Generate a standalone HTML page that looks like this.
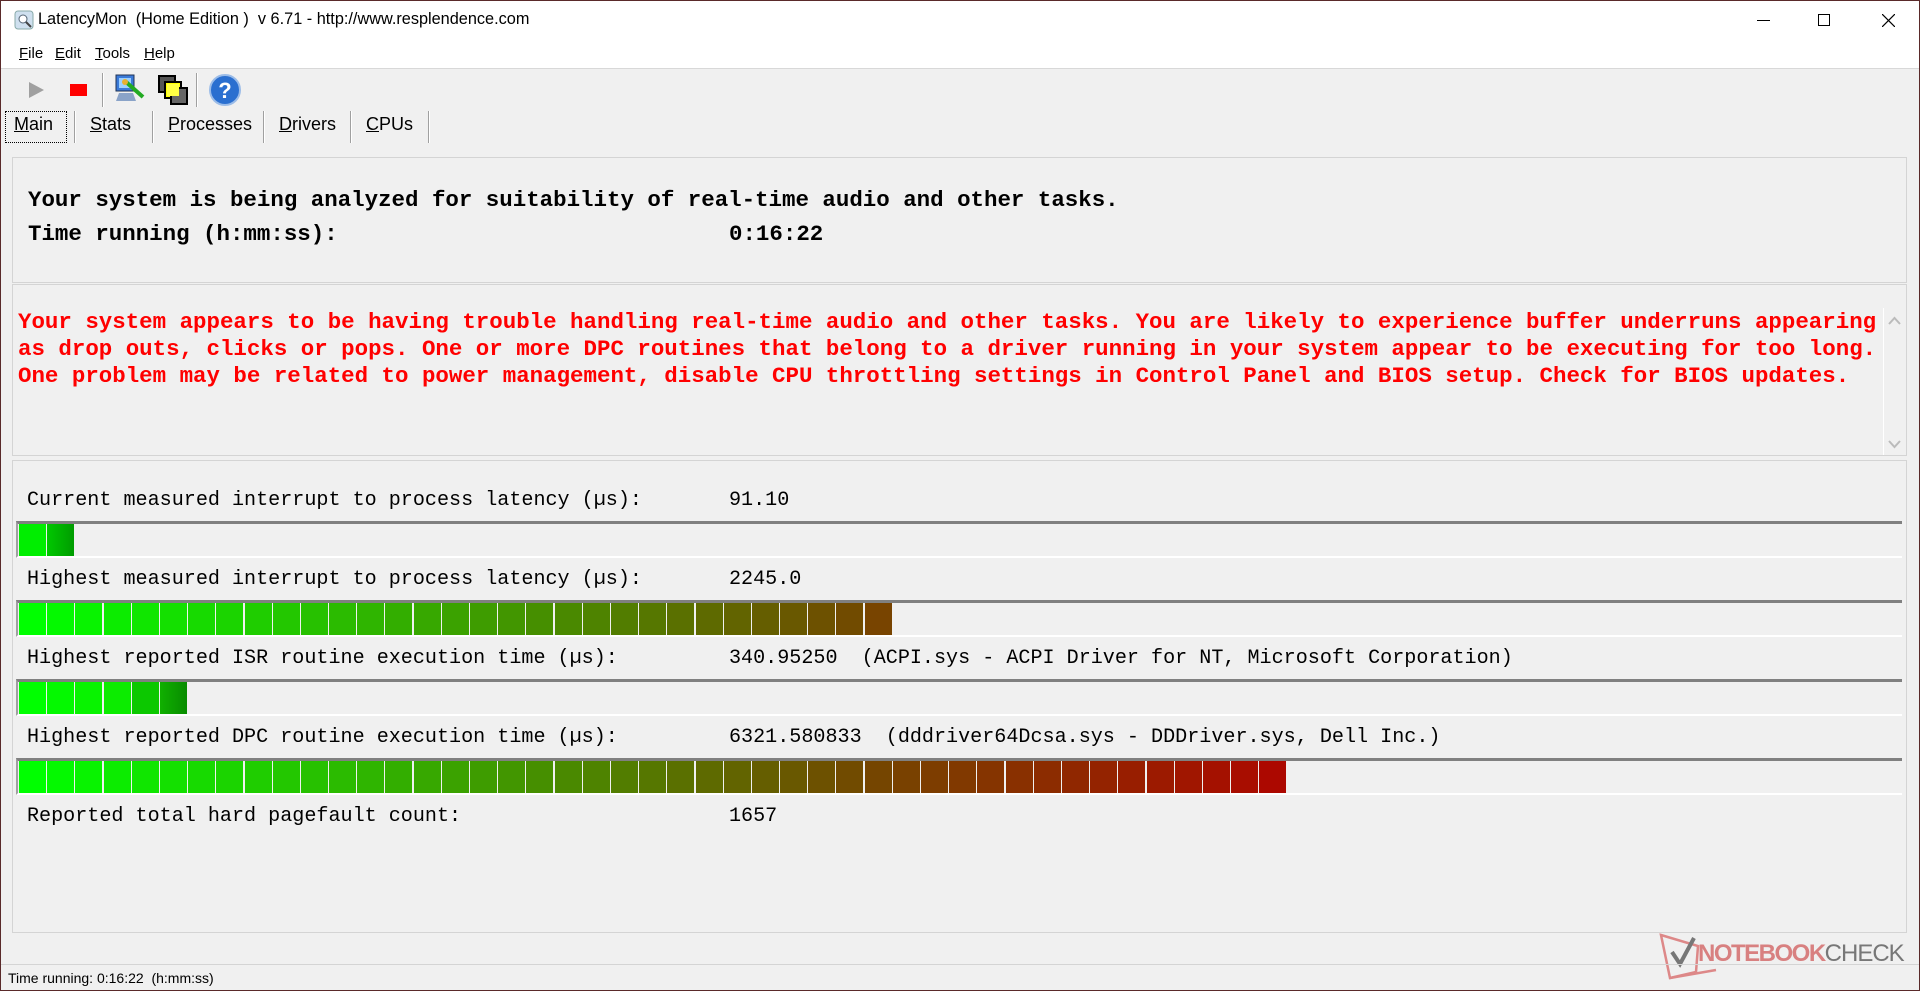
<!DOCTYPE html>
<html><head><meta charset="utf-8"><style>
*{margin:0;padding:0;box-sizing:border-box}
body{width:1920px;height:991px;overflow:hidden;background:#f0f0f0;font-family:"Liberation Sans",sans-serif;position:relative}
.abs{position:absolute}
.frame{position:absolute;left:0;top:0;width:1920px;height:991px;border:1px solid #5a2a2a;pointer-events:none}
.title{left:0;top:0;width:1920px;height:40px;background:#fff}
.menu{left:0;top:40px;width:1920px;height:29px;background:#fff;border-bottom:1px solid #d8d8d8}
.mi{position:absolute;top:45px;font-size:15px;color:#000}
.mono{font-family:"Liberation Mono",monospace}
.panel{position:absolute;left:12px;width:1895px;border:1px solid #d4d4d4;background:#f0f0f0}
.b{font-weight:bold;font-size:22.45px;white-space:pre}
.lbl{position:absolute;font-size:20.1px;white-space:pre;color:#000;font-family:"Liberation Mono",monospace}
.bar{position:absolute;left:16px;width:1886px;height:37px;border-top:3px solid #808080;border-left:2px solid #a0a0a0;border-bottom:2px solid #fff;background:#f0f0f0;display:flex;gap:1.2px;padding-left:1px}
.bar i{display:block;width:27px;height:32px;flex:none}
.tab{position:absolute;top:114px;font-size:18px}
.sep{position:absolute;top:111px;width:2px;height:32px;border-left:1px solid #a0a0a0;border-right:1px solid #fff}
</style></head><body>
<div class="abs title"></div>
<svg class="abs" style="left:13px;top:9px" width="22" height="22" viewBox="0 0 22 22"><rect x="2" y="2" width="18" height="18" rx="3" fill="#cfe0ef" stroke="#8aa"/><circle cx="10" cy="10" r="4" fill="#fff" stroke="#567"/><line x1="13" y1="13" x2="18" y2="18" stroke="#444" stroke-width="2"/></svg>
<div class="abs" style="left:38px;top:10px;font-size:16.3px;color:#000;white-space:pre">LatencyMon  (Home Edition )  v 6.71 - http://www.resplendence.com</div>
<div class="abs" style="left:1757px;top:20px;width:13px;height:1px;background:#000"></div>
<div class="abs" style="left:1818px;top:14px;width:12px;height:12px;border:1px solid #000"></div>
<svg class="abs" style="left:1882px;top:14px" width="13" height="13"><path d="M0 0L13 13M13 0L0 13" stroke="#000" stroke-width="1.2"/></svg>
<div class="abs menu"></div>
<div class="mi" style="left:19px"><u>F</u>ile</div>
<div class="mi" style="left:55px"><u>E</u>dit</div>
<div class="mi" style="left:95px"><u>T</u>ools</div>
<div class="mi" style="left:144px"><u>H</u>elp</div>
<svg class="abs" style="left:28px;top:81px" width="18" height="18"><path d="M1 1L16 9L1 17Z" fill="#a0a0a0"/></svg>
<div class="abs" style="left:70px;top:84px;width:17px;height:12px;background:#f00"></div>
<div class="abs" style="left:102px;top:73px;width:2px;height:34px;border-left:1px solid #a0a0a0;border-right:1px solid #fff"></div>
<svg class="abs" style="left:113px;top:73px" width="34" height="34"><rect x="3" y="2" width="18" height="16" fill="#3a7ad8" stroke="#235"/><rect x="6" y="5" width="12" height="10" fill="#9cd0ff"/><path d="M6 20h14l3 8H3z" fill="#8aa3c8"/><path d="M12 8L30 24" stroke="#2a2" stroke-width="4"/><circle cx="12" cy="9" r="3" fill="#e8b030"/></svg>
<svg class="abs" style="left:158px;top:74px" width="32" height="32"><rect x="1" y="2" width="16" height="16" fill="#555" stroke="#000" stroke-width="2"/><rect x="7" y="8" width="16" height="16" fill="#ff0" stroke="#000" stroke-width="2"/><rect x="13" y="14" width="16" height="16" fill="#666" stroke="#000" stroke-width="2"/><rect x="9" y="10" width="12" height="12" fill="#ff4"/></svg>
<div class="abs" style="left:196px;top:73px;width:2px;height:34px;border-left:1px solid #a0a0a0;border-right:1px solid #fff"></div>
<svg class="abs" style="left:209px;top:74px" width="32" height="32"><circle cx="16" cy="16" r="15" fill="#2a6fd0" stroke="#9bbce8" stroke-width="2"/><text x="16" y="24" font-size="22" font-weight="bold" text-anchor="middle" fill="#fff" font-family="Liberation Sans">?</text></svg>
<div class="abs" style="left:5px;top:111px;width:62px;height:32px;border:1px dotted #000"></div>
<div class="tab" style="left:14px"><u>M</u>ain</div>
<div class="sep" style="left:74px"></div>
<div class="tab" style="left:90px"><u>S</u>tats</div>
<div class="sep" style="left:152px"></div>
<div class="tab" style="left:168px"><u>P</u>rocesses</div>
<div class="sep" style="left:263px"></div>
<div class="tab" style="left:279px"><u>D</u>rivers</div>
<div class="sep" style="left:350px"></div>
<div class="tab" style="left:366px"><u>C</u>PUs</div>
<div class="sep" style="left:428px"></div>

<div class="panel" style="top:157px;height:126px"></div>
<div class="abs mono b" style="left:28px;top:187px">Your system is being analyzed for suitability of real-time audio and other tasks.</div>
<div class="abs mono b" style="left:28px;top:221px">Time running (h:mm:ss):</div>
<div class="abs mono b" style="left:729px;top:221px">0:16:22</div>

<div class="panel" style="top:284px;height:172px"></div>
<div class="abs mono b" style="left:18px;top:309px;color:#f00;line-height:27px">Your system appears to be having trouble handling real-time audio and other tasks. You are likely to experience buffer underruns appearing
as drop outs, clicks or pops. One or more DPC routines that belong to a driver running in your system appear to be executing for too long.
One problem may be related to power management, disable CPU throttling settings in Control Panel and BIOS setup. Check for BIOS updates.</div>
<div class="abs" style="left:1883px;top:308px;width:23px;height:147px;background:#f0f0f0;border-left:1px solid #fff"></div>
<svg class="abs" style="left:1888px;top:316px" width="13" height="9"><path d="M1 8L6.5 2L12 8" stroke="#bbb" stroke-width="2" fill="none"/></svg>
<svg class="abs" style="left:1888px;top:440px" width="13" height="9"><path d="M1 1L6.5 7L12 1" stroke="#bbb" stroke-width="2" fill="none"/></svg>

<div class="panel" style="top:460px;height:473px"></div>
<div class="lbl" style="left:27px;top:489px">Current measured interrupt to process latency (µs):</div>
<div class="lbl" style="left:729px;top:489px">91.10</div>
<div class="bar" style="top:521px"><i style="background:#00ee00"></i><i style="background:linear-gradient(90deg,#00c800,#009c00)"></i></div>
<div class="lbl" style="left:27px;top:568px">Highest measured interrupt to process latency (µs):</div>
<div class="lbl" style="left:729px;top:568px">2245.0</div>
<div class="bar" style="top:600px">
<i style="background:rgb(0,255,0)"></i><i style="background:rgb(4,249,0)"></i><i style="background:rgb(8,243,0)"></i><i style="background:rgb(12,236,0)"></i><i style="background:rgb(16,230,0)"></i><i style="background:rgb(20,224,0)"></i><i style="background:rgb(23,218,0)"></i><i style="background:rgb(27,212,0)"></i><i style="background:rgb(31,205,0)"></i><i style="background:rgb(35,199,0)"></i><i style="background:rgb(39,193,0)"></i><i style="background:rgb(43,187,0)"></i><i style="background:rgb(47,181,0)"></i><i style="background:rgb(51,174,0)"></i><i style="background:rgb(55,168,0)"></i><i style="background:rgb(59,162,0)"></i><i style="background:rgb(62,156,0)"></i><i style="background:rgb(66,150,0)"></i><i style="background:rgb(70,143,0)"></i><i style="background:rgb(74,137,0)"></i><i style="background:rgb(78,131,0)"></i><i style="background:rgb(82,125,0)"></i><i style="background:rgb(86,119,0)"></i><i style="background:rgb(90,112,0)"></i><i style="background:rgb(94,106,0)"></i><i style="background:rgb(98,100,0)"></i><i style="background:rgb(101,94,0)"></i><i style="background:rgb(105,88,0)"></i><i style="background:rgb(109,81,0)"></i><i style="background:rgb(113,75,0)"></i><i style="background:rgb(120,68,0)"></i>
</div>
<div class="lbl" style="left:27px;top:647px">Highest reported ISR routine execution time (µs):</div>
<div class="lbl" style="left:729px;top:647px">340.95250  (ACPI.sys - ACPI Driver for NT, Microsoft Corporation)</div>
<div class="bar" style="top:679px"><i style="background:rgb(0,255,0)"></i><i style="background:rgb(4,249,0)"></i><i style="background:rgb(8,243,0)"></i><i style="background:rgb(12,236,0)"></i><i style="background:rgb(12,200,0)"></i><i style="background:linear-gradient(90deg,#10b000,#088c00)"></i></div>
<div class="lbl" style="left:27px;top:726px">Highest reported DPC routine execution time (µs):</div>
<div class="lbl" style="left:729px;top:726px">6321.580833  (dddriver64Dcsa.sys - DDDriver.sys, Dell Inc.)</div>
<div class="bar" style="top:758px">
<i style="background:rgb(0,255,0)"></i><i style="background:rgb(4,249,0)"></i><i style="background:rgb(8,243,0)"></i><i style="background:rgb(12,236,0)"></i><i style="background:rgb(16,230,0)"></i><i style="background:rgb(20,224,0)"></i><i style="background:rgb(23,218,0)"></i><i style="background:rgb(27,212,0)"></i><i style="background:rgb(31,205,0)"></i><i style="background:rgb(35,199,0)"></i><i style="background:rgb(39,193,0)"></i><i style="background:rgb(43,187,0)"></i><i style="background:rgb(47,181,0)"></i><i style="background:rgb(51,174,0)"></i><i style="background:rgb(55,168,0)"></i><i style="background:rgb(59,162,0)"></i><i style="background:rgb(62,156,0)"></i><i style="background:rgb(66,150,0)"></i><i style="background:rgb(70,143,0)"></i><i style="background:rgb(74,137,0)"></i><i style="background:rgb(78,131,0)"></i><i style="background:rgb(82,125,0)"></i><i style="background:rgb(86,119,0)"></i><i style="background:rgb(90,112,0)"></i><i style="background:rgb(94,106,0)"></i><i style="background:rgb(98,100,0)"></i><i style="background:rgb(101,94,0)"></i><i style="background:rgb(105,88,0)"></i><i style="background:rgb(109,81,0)"></i><i style="background:rgb(113,75,0)"></i><i style="background:rgb(117,69,0)"></i><i style="background:rgb(121,65,0)"></i><i style="background:rgb(125,61,0)"></i><i style="background:rgb(129,57,0)"></i><i style="background:rgb(133,52,0)"></i><i style="background:rgb(137,48,0)"></i><i style="background:rgb(140,44,0)"></i><i style="background:rgb(144,39,0)"></i><i style="background:rgb(148,35,0)"></i><i style="background:rgb(152,30,0)"></i><i style="background:rgb(156,26,0)"></i><i style="background:rgb(160,22,0)"></i><i style="background:rgb(164,17,0)"></i><i style="background:rgb(168,13,0)"></i><i style="background:rgb(172,8,0)"></i>
</div>
<div class="lbl" style="left:27px;top:805px">Reported total hard pagefault count:</div>
<div class="lbl" style="left:729px;top:805px">1657</div>

<svg class="abs" style="left:1658px;top:932px" width="70" height="50"><path d="M3 3L40 14L38 40L12 46Z" fill="none" stroke="#d88" stroke-width="2.5"/><path d="M12 46L58 38" stroke="#d88" stroke-width="2.5"/><path d="M14 20L22 32L36 6" stroke="#777" stroke-width="4" fill="none"/></svg>
<div class="abs" style="left:1698px;top:940px;font-size:24px;font-weight:bold;letter-spacing:-1.5px;color:#d88080;white-space:nowrap">NOTEBOOK<span style="color:#777;font-weight:normal;letter-spacing:-1px">CHECK</span></div>

<div class="abs" style="left:0;top:964px;width:1920px;height:1px;background:#d4d4d4"></div>
<div class="abs" style="left:8px;top:970px;font-size:14px;color:#000;white-space:pre">Time running: 0:16:22  (h:mm:ss)</div>
<div class="frame"></div>
</body></html>
